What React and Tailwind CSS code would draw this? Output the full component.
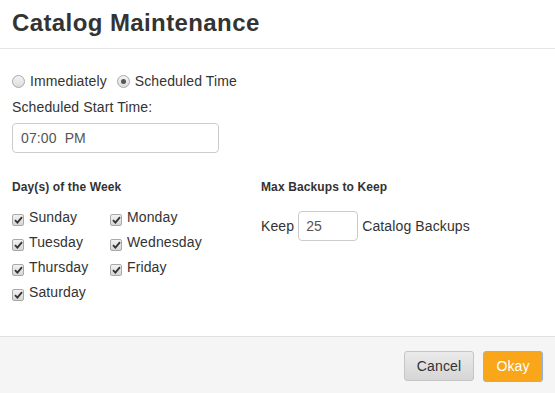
import React, { useState } from 'react';

const Radio = ({ checked, label, onClick }) => (
    <label className="flex items-center gap-[5px] cursor-pointer" onClick={onClick}>
        <span className="w-[13px] h-[13px] rounded-full border border-[#a9a9a9] bg-gradient-to-b from-[#f4f4f4] to-[#dcdcdc] flex items-center justify-center">
            {checked && <span className="w-[5px] h-[5px] rounded-full bg-[#555]" />}
        </span>
        <span>{label}</span>
    </label>
);

const Check = ({ label }) => (
    <label className="flex items-center gap-[5px] h-[25px]">
        <span className="w-[12px] h-[12px] mt-[4px] rounded-[2px] border border-[#a9a9a9] bg-gradient-to-b from-[#f2f2f2] to-[#d6d6d6] flex items-center justify-center">
            <svg width="9" height="8" viewBox="0 0 9 8">
                <path d="M1 4.2 L3.4 6.6 L8 1.2" stroke="#333" strokeWidth="1.8" fill="none" />
            </svg>
        </span>
        <span>{label}</span>
    </label>
);

const App = () => {
    const [mode, setMode] = useState('scheduled');

    return (
        <div className="w-[555px] h-[393px] bg-white flex flex-col text-[14px] text-[#333] tracking-[0.12px]" style={{ fontFamily: '"Liberation Sans", Arial, sans-serif' }}>

            {/* Header */}
            <div className="h-[49px] border-b border-[#e5e5e5] px-[12px] pt-[7px]">
                <h1 className="text-[24px] font-bold leading-[32px] text-[#333] tracking-[0.4px]">Catalog Maintenance</h1>
            </div>

            {/* Body */}
            <div className="flex-1 px-[12px] pt-[23px]">
                <div className="flex items-center gap-[10px] h-[18px]">
                    <Radio label="Immediately" checked={mode === 'now'} onClick={() => setMode('now')} />
                    <Radio label="Scheduled Time" checked={mode === 'scheduled'} onClick={() => setMode('scheduled')} />
                </div>
                <div className="mt-[7px] leading-[20px]">Scheduled Start Time:</div>
                <input
                    type="text"
                    defaultValue="07:00  PM"
                    className="mt-[6px] w-[207px] h-[30px] border border-[#ccc] rounded-[4px] px-[8px] text-[14px] text-[#555] outline-none whitespace-pre"
                />

                <div className="flex mt-[26px]">
                    <div className="w-[249px]">
                        <div className="text-[12px] font-bold leading-[16px]">Day(s) of the Week</div>
                        <div className="grid grid-cols-[98px_1fr] mt-[10px]">
                            <Check label="Sunday" />
                            <Check label="Monday" />
                            <Check label="Tuesday" />
                            <Check label="Wednesday" />
                            <Check label="Thursday" />
                            <Check label="Friday" />
                            <Check label="Saturday" />
                        </div>
                    </div>
                    <div>
                        <div className="text-[12px] font-bold leading-[16px]">Max Backups to Keep</div>
                        <div className="flex items-center gap-[4px] mt-[16px]">
                            <span>Keep</span>
                            <input
                                type="text"
                                defaultValue="25"
                                className="w-[60px] h-[30px] border border-[#ccc] rounded-[4px] px-[7px] text-[14px] text-[#555] outline-none"
                            />
                            <span>Catalog Backups</span>
                        </div>
                    </div>
                </div>
            </div>

            {/* Footer */}
            <div className="h-[57px] border-t border-[#e0e0e0] bg-[#f5f5f5] flex items-start justify-end gap-[9px] pt-[14px] pr-[12px]">
                <button className="w-[70px] h-[30px] rounded-[3px] border border-[#c5c5c5] bg-gradient-to-b from-[#ebebeb] to-[#d5d5d5] text-[#333] text-[14px]">
                    Cancel
                </button>
                <button className="w-[60px] h-[31px] rounded-[3px] border border-[#8fb3e8] bg-[#f9a61a] text-white text-[14px]">
                    Okay
                </button>
            </div>
        </div>
    );
};

export default App;
